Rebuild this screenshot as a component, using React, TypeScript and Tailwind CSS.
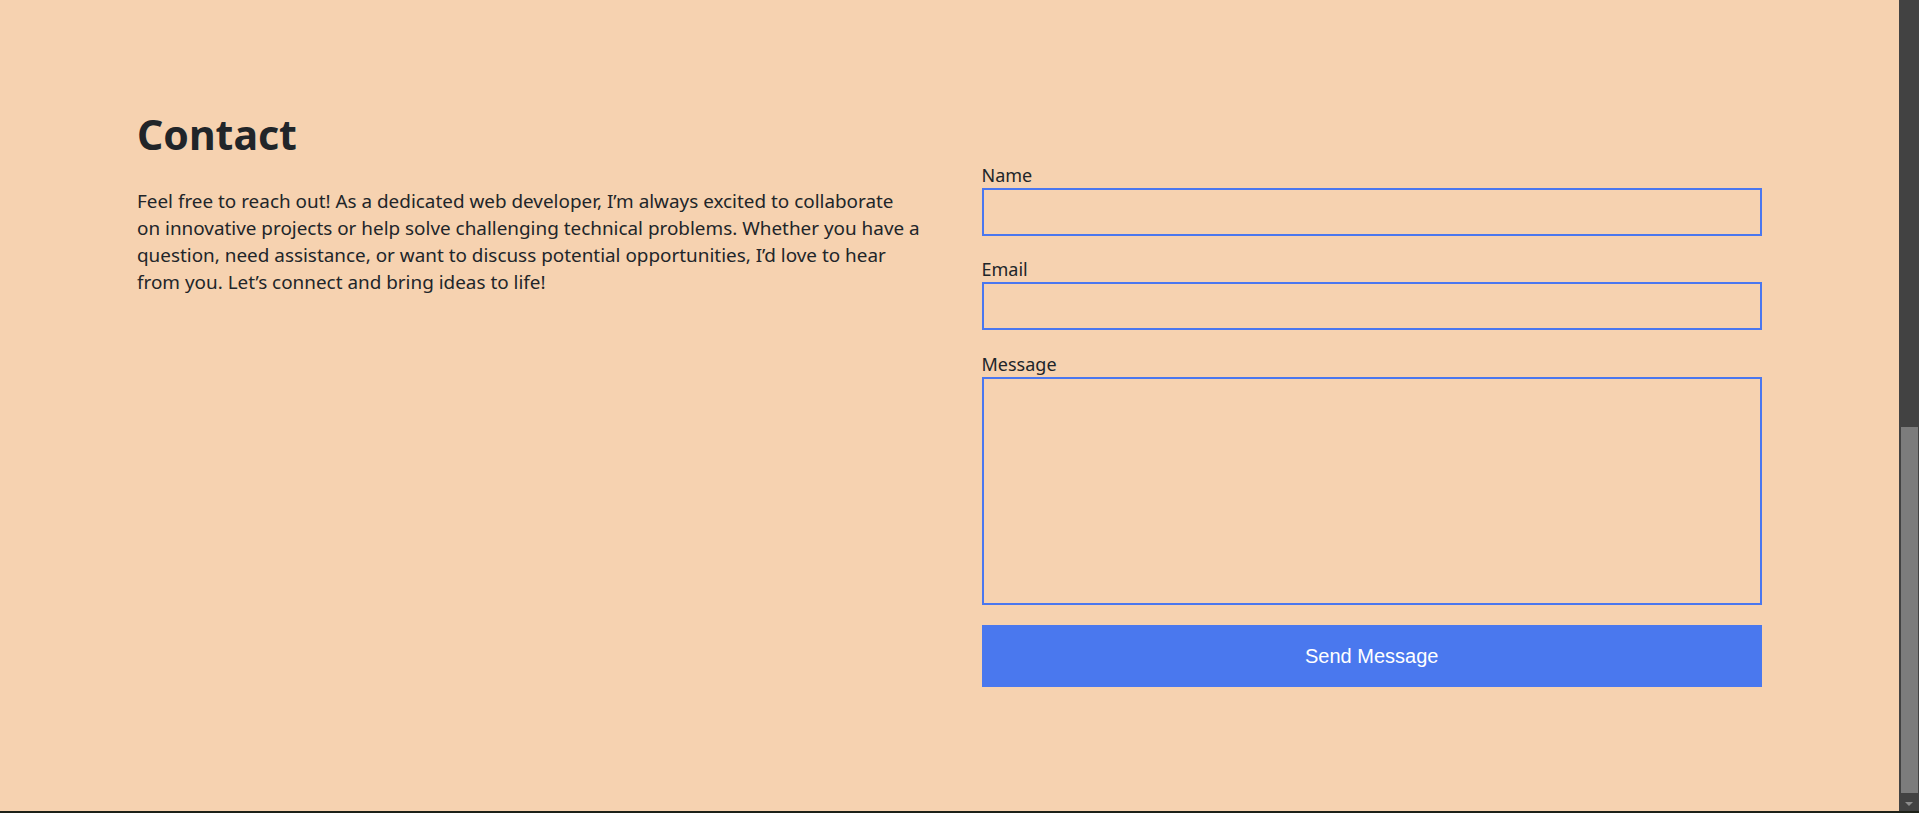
const fields = [
  { id: "name", label: "Name", type: "text" },
  { id: "email", label: "Email", type: "email" },
];

const intro = [
  "Feel free to reach out! As a dedicated web developer, I’m always excited to collaborate",
  "on innovative projects or help solve challenging technical problems. Whether you have a",
  "question, need assistance, or want to discuss potential opportunities, I’d love to hear",
  "from you. Let’s connect and bring ideas to life!",
];

export default function App() {
  return (
    <div className="flex h-[813px] w-full overflow-hidden bg-[#f6d2b0]">
      {/* Page */}
      <div className="flex flex-1 flex-col border-b-2 border-[#1d2118]">
        <section className="flex-1 px-[137px] pt-[114px] font-['Noto_Sans',sans-serif] text-[#212529]">
          <div className="grid grid-cols-2 items-start gap-16">
            <div>
              <h2 className="text-[41px] font-bold leading-none">Contact</h2>
              <p className="mt-[33px] text-[18.9px] leading-[27px] whitespace-nowrap">
                {intro.map((line, i) => (
                  <span key={i}>
                    {line}
                    {i < intro.length - 1 && <br />}
                  </span>
                ))}
              </p>
            </div>

            <form className="mt-12 flex flex-col" onSubmit={(e) => e.preventDefault()}>
              {fields.map((f) => (
                <div key={f.id} className="mb-5">
                  <label htmlFor={f.id} className="block text-[18px] leading-[26px]">
                    {f.label}
                  </label>
                  <input
                    id={f.id}
                    type={f.type}
                    className="block h-12 w-full border-2 border-[#4a77ef] bg-transparent px-2 outline-none"
                  />
                </div>
              ))}
              <div className="mt-px mb-5">
                <label htmlFor="message" className="block text-[18px] leading-[26px]">
                  Message
                </label>
                <textarea
                  id="message"
                  className="block h-[228px] w-full resize-none border-2 border-[#4a77ef] bg-transparent px-2 outline-none"
                />
              </div>
              <button
                type="submit"
                className="h-[62px] w-full bg-[#4a78ee] font-['Liberation_Sans',Arial,sans-serif] text-[20px] text-white"
              >
                Send Message
              </button>
            </form>
          </div>
        </section>
      </div>

      {/* Scrollbar */}
      <div className="relative w-5 border-b-2 border-[#1d2118] bg-[#424242]">
        <div className="absolute top-[427px] right-px left-[2px] h-[366px] bg-[#7c7c7c]" />
        <div className="absolute bottom-[5px] left-[6px] h-0 w-0 border-x-[4px] border-t-[4px] border-x-transparent border-t-[#8c8c8c]" />
      </div>
    </div>
  );
}
